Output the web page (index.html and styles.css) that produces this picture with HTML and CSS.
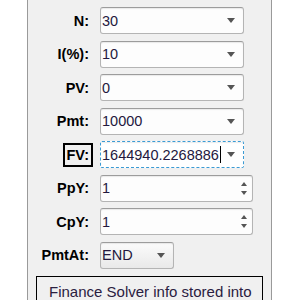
FILE: index.html
```html
<!DOCTYPE html>
<html>
<head>
<meta charset="utf-8">
<link rel="stylesheet" href="styles.css">
</head>
<body>
<div class="panel">
  <div class="form">
    <div class="label">N:</div>
    <div class="field select w-wide"><span class="val">30</span><svg class="arrow" width="8" height="5" viewBox="0 0 8 5"><path d="M0 0H8L4 5Z"/></svg></div>

    <div class="label">I(%):</div>
    <div class="field select w-wide"><span class="val">10</span><svg class="arrow" width="8" height="5" viewBox="0 0 8 5"><path d="M0 0H8L4 5Z"/></svg></div>

    <div class="label">PV:</div>
    <div class="field select w-wide"><span class="val">0</span><svg class="arrow" width="8" height="5" viewBox="0 0 8 5"><path d="M0 0H8L4 5Z"/></svg></div>

    <div class="label">Pmt:</div>
    <div class="field select w-wide"><span class="val">10000</span><svg class="arrow" width="8" height="5" viewBox="0 0 8 5"><path d="M0 0H8L4 5Z"/></svg></div>

    <div class="label"><span class="boxed">FV:</span></div>
    <div class="field select w-wide focus"><span class="val">1644940.2268886</span><span class="caret"></span><svg class="arrow" width="8" height="5" viewBox="0 0 8 5"><path d="M0 0H8L4 5Z"/></svg></div>

    <div class="label">PpY:</div>
    <div class="field spin w-spin"><span class="val">1</span><span class="spinner"><svg width="6" height="4" viewBox="0 0 6 4"><path d="M0 4H6L3 0Z"/></svg><svg width="6" height="4" viewBox="0 0 6 4"><path d="M0 0H6L3 4Z"/></svg></span></div>

    <div class="label">CpY:</div>
    <div class="field spin w-spin"><span class="val">1</span><span class="spinner"><svg width="6" height="4" viewBox="0 0 6 4"><path d="M0 4H6L3 0Z"/></svg><svg width="6" height="4" viewBox="0 0 6 4"><path d="M0 0H6L3 4Z"/></svg></span></div>

    <div class="label">PmtAt:</div>
    <div class="field select combo w-short"><span class="val">END</span><svg class="arrow" width="8" height="5" viewBox="0 0 8 5"><path d="M0 0H8L4 5Z"/></svg></div>
  </div>
  <div class="message">Finance Solver info stored into</div>
</div>
</body>
</html>
```

FILE: styles.css
```css
html, body {
  margin: 0;
  padding: 0;
  background: #ffffff;
  overflow: hidden;
}
body {
  width: 300px;
  height: 300px;
  font-family: "Liberation Sans", Arial, sans-serif;
}
.panel {
  margin-left: 27px;
  width: 243px;
  height: 293px;
  border-left: 1px solid #9a9a9a;
  border-right: 1px solid #9a9a9a;
  background: #f0f0f0;
  padding-top: 7px;
  box-sizing: content-box;
  overflow: hidden;
}
.form {
  display: grid;
  grid-template-columns: 65px auto;
  column-gap: 7px;
  row-gap: 6.5px;
  align-items: center;
  justify-items: start;
}
.label {
  justify-self: end;
  padding-right: 4px;
  font-weight: bold;
  font-size: 14.5px;
  color: #000;
  display: flex;
  align-items: center;
}
.boxed {
  display: block;
  border: 2px solid #000;
  padding: 2px 2px 2px 1px;
  margin-right: -4px;
  line-height: 16px;
}
.field {
  box-sizing: border-box;
  height: 27px;
  border: 1px solid #b4b4b4;
  border-top-color: #9c9c9c;
  border-radius: 3px;
  background: #fdfdfd;
  box-shadow: inset 0 1px 1px rgba(0,0,0,0.08);
  display: flex;
  align-items: center;
  padding-left: 1px;
  font-size: 14.5px;
  color: #24183e;
}
.w-wide { width: 144px; }
.w-spin { width: 153px; }
.w-short { width: 74px; }
.val {
  white-space: nowrap;
}
.select .arrow {
  margin-left: auto;
  margin-right: 8px;
  fill: #555;
}
.combo {
  background: linear-gradient(#fbfbfb, #e9e9e9);
}
.focus {
  border: 1px dashed #3b9bd4;
  border-radius: 2px;
  background: #ffffff;
}
.caret {
  display: inline-block;
  width: 1px;
  height: 17px;
  background: #000;
  margin-left: 1px;
}
.spinner {
  margin-left: auto;
  margin-right: 5px;
  display: flex;
  flex-direction: column;
  gap: 5px;
  fill: #555;
}
.spinner svg {
  display: block;
}
.message {
  margin-top: 7.5px;
  margin-left: 8px;
  width: 227px;
  height: 40px;
  box-sizing: border-box;
  border: 1px solid #000;
  padding: 6px 0 0 12px;
  font-size: 15px;
  color: #2a2040;
  white-space: nowrap;
}
```
